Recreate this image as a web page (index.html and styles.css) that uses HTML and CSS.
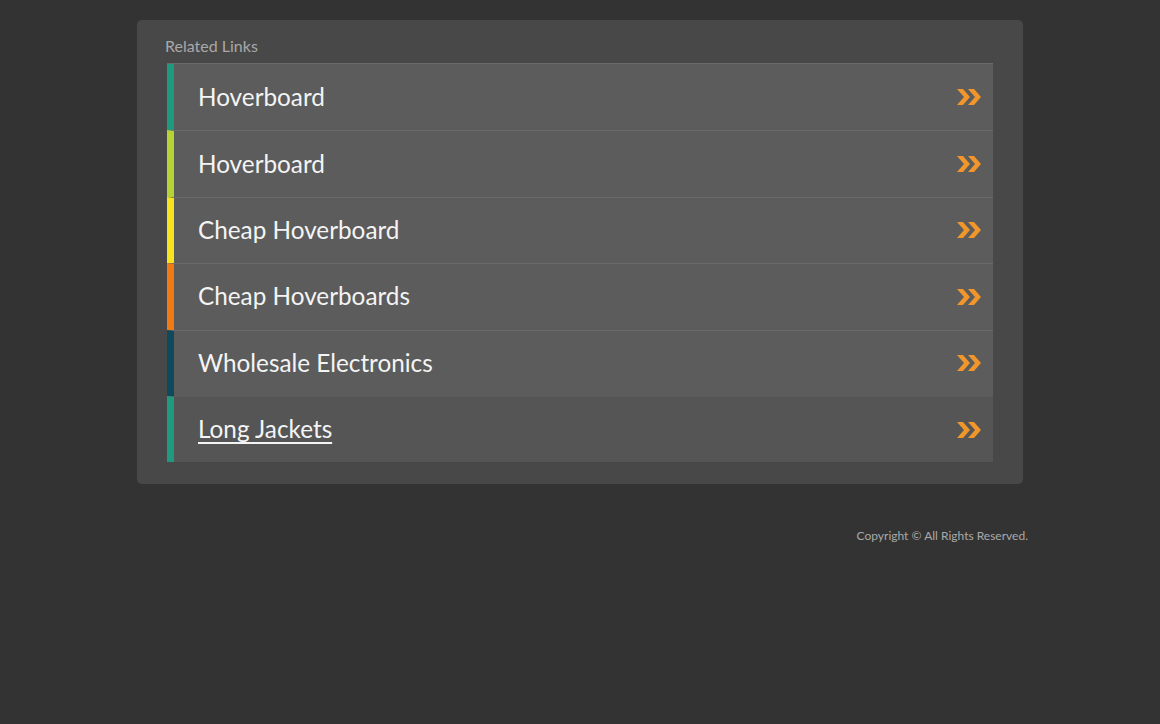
FILE: index.html
```html
<!DOCTYPE html>
<html lang="en">

<head>
    <meta charset="UTF-8">
    <meta name="viewport" content="width=device-width, initial-scale=1.0">
    <title>Related Links</title>
    <link rel="icon" href="data:,">
    <link rel="stylesheet" href="styles.css">
</head>

<body>
    <div id="wrapper">
        <div class="card">
            <div class="card-title">Related Links</div>
            <ul class="links">
                <li class="link teal"><a href="#">Hoverboard</a><svg class="arrow" width="26" height="20" viewBox="0 0 26 20"><path d="M1 2h6l7 8-7 8H1l7-8z M12 2h6l7 8-7 8h-6l7-8z" fill="#f0962a"/></svg></li>
                <li class="link lime"><a href="#">Hoverboard</a><svg class="arrow" width="26" height="20" viewBox="0 0 26 20"><path d="M1 2h6l7 8-7 8H1l7-8z M12 2h6l7 8-7 8h-6l7-8z" fill="#f0962a"/></svg></li>
                <li class="link yellow"><a href="#">Cheap Hoverboard</a><svg class="arrow" width="26" height="20" viewBox="0 0 26 20"><path d="M1 2h6l7 8-7 8H1l7-8z M12 2h6l7 8-7 8h-6l7-8z" fill="#f0962a"/></svg></li>
                <li class="link orange"><a href="#">Cheap Hoverboards</a><svg class="arrow" width="26" height="20" viewBox="0 0 26 20"><path d="M1 2h6l7 8-7 8H1l7-8z M12 2h6l7 8-7 8h-6l7-8z" fill="#f0962a"/></svg></li>
                <li class="link navy"><a href="#">Wholesale Electronics</a><svg class="arrow" width="26" height="20" viewBox="0 0 26 20"><path d="M1 2h6l7 8-7 8H1l7-8z M12 2h6l7 8-7 8h-6l7-8z" fill="#f0962a"/></svg></li>
                <li class="link teal hover"><a href="#">Long Jackets</a><svg class="arrow" width="26" height="20" viewBox="0 0 26 20"><path d="M1 2h6l7 8-7 8H1l7-8z M12 2h6l7 8-7 8h-6l7-8z" fill="#f0962a"/></svg></li>
            </ul>
        </div>
        <div class="footer">Copyright © All Rights Reserved.</div>
    </div>
</body>

</html>
```

FILE: styles.css
```css
body {
    background-color: #333333;
    margin: 0;
    font-family: Lato, "Open Sans", sans-serif;
}

#wrapper {
    width: 896px;
    margin: 0 auto;
    padding-top: 20px;
}

.card {
    width: 886px;
    margin: 0 auto;
    box-sizing: border-box;
    background-color: #484848;
    border-radius: 5px;
    padding: 17px 30px 22px 30px;
}

.card-title {
    color: #a9a9a9;
    font-size: 16px;
    line-height: 18px;
    margin-left: -2px;
    margin-bottom: 8px;
}

.links {
    list-style: none;
    margin: 0;
    padding: 0;
    border-top: 1px solid #6a6a6a;
}

.link {
    display: flex;
    align-items: center;
    justify-content: space-between;
    height: 66.4px;
    box-sizing: border-box;
    padding: 0 11px 0 24px;
    background-color: #5c5c5c;
    border-left: 7px solid #1f9a7e;
    border-top: 1px solid #6a6a6a;
}

.link:first-child {
    border-top: none;
}

.link a {
    color: #f4f4f4;
    font-size: 24.3px;
    text-decoration: none;
    margin-top: -2px;
}

.link.hover {
    background-color: #555555;
    border-top-color: #5c5c5c;
}

.link.hover a {
    text-decoration: underline;
    text-underline-offset: 4px;
    text-decoration-thickness: 2px;
}

.teal {
    border-left-color: #1f9a7e;
}

.lime {
    border-left-color: #b5d334;
}

.yellow {
    border-left-color: #f7e41f;
}

.orange {
    border-left-color: #f27a12;
}

.navy {
    border-left-color: #0e4a5c;
}

.footer {
    text-align: right;
    color: #a9a9a9;
    font-size: 12px;
    margin-top: 44px;
}
```
